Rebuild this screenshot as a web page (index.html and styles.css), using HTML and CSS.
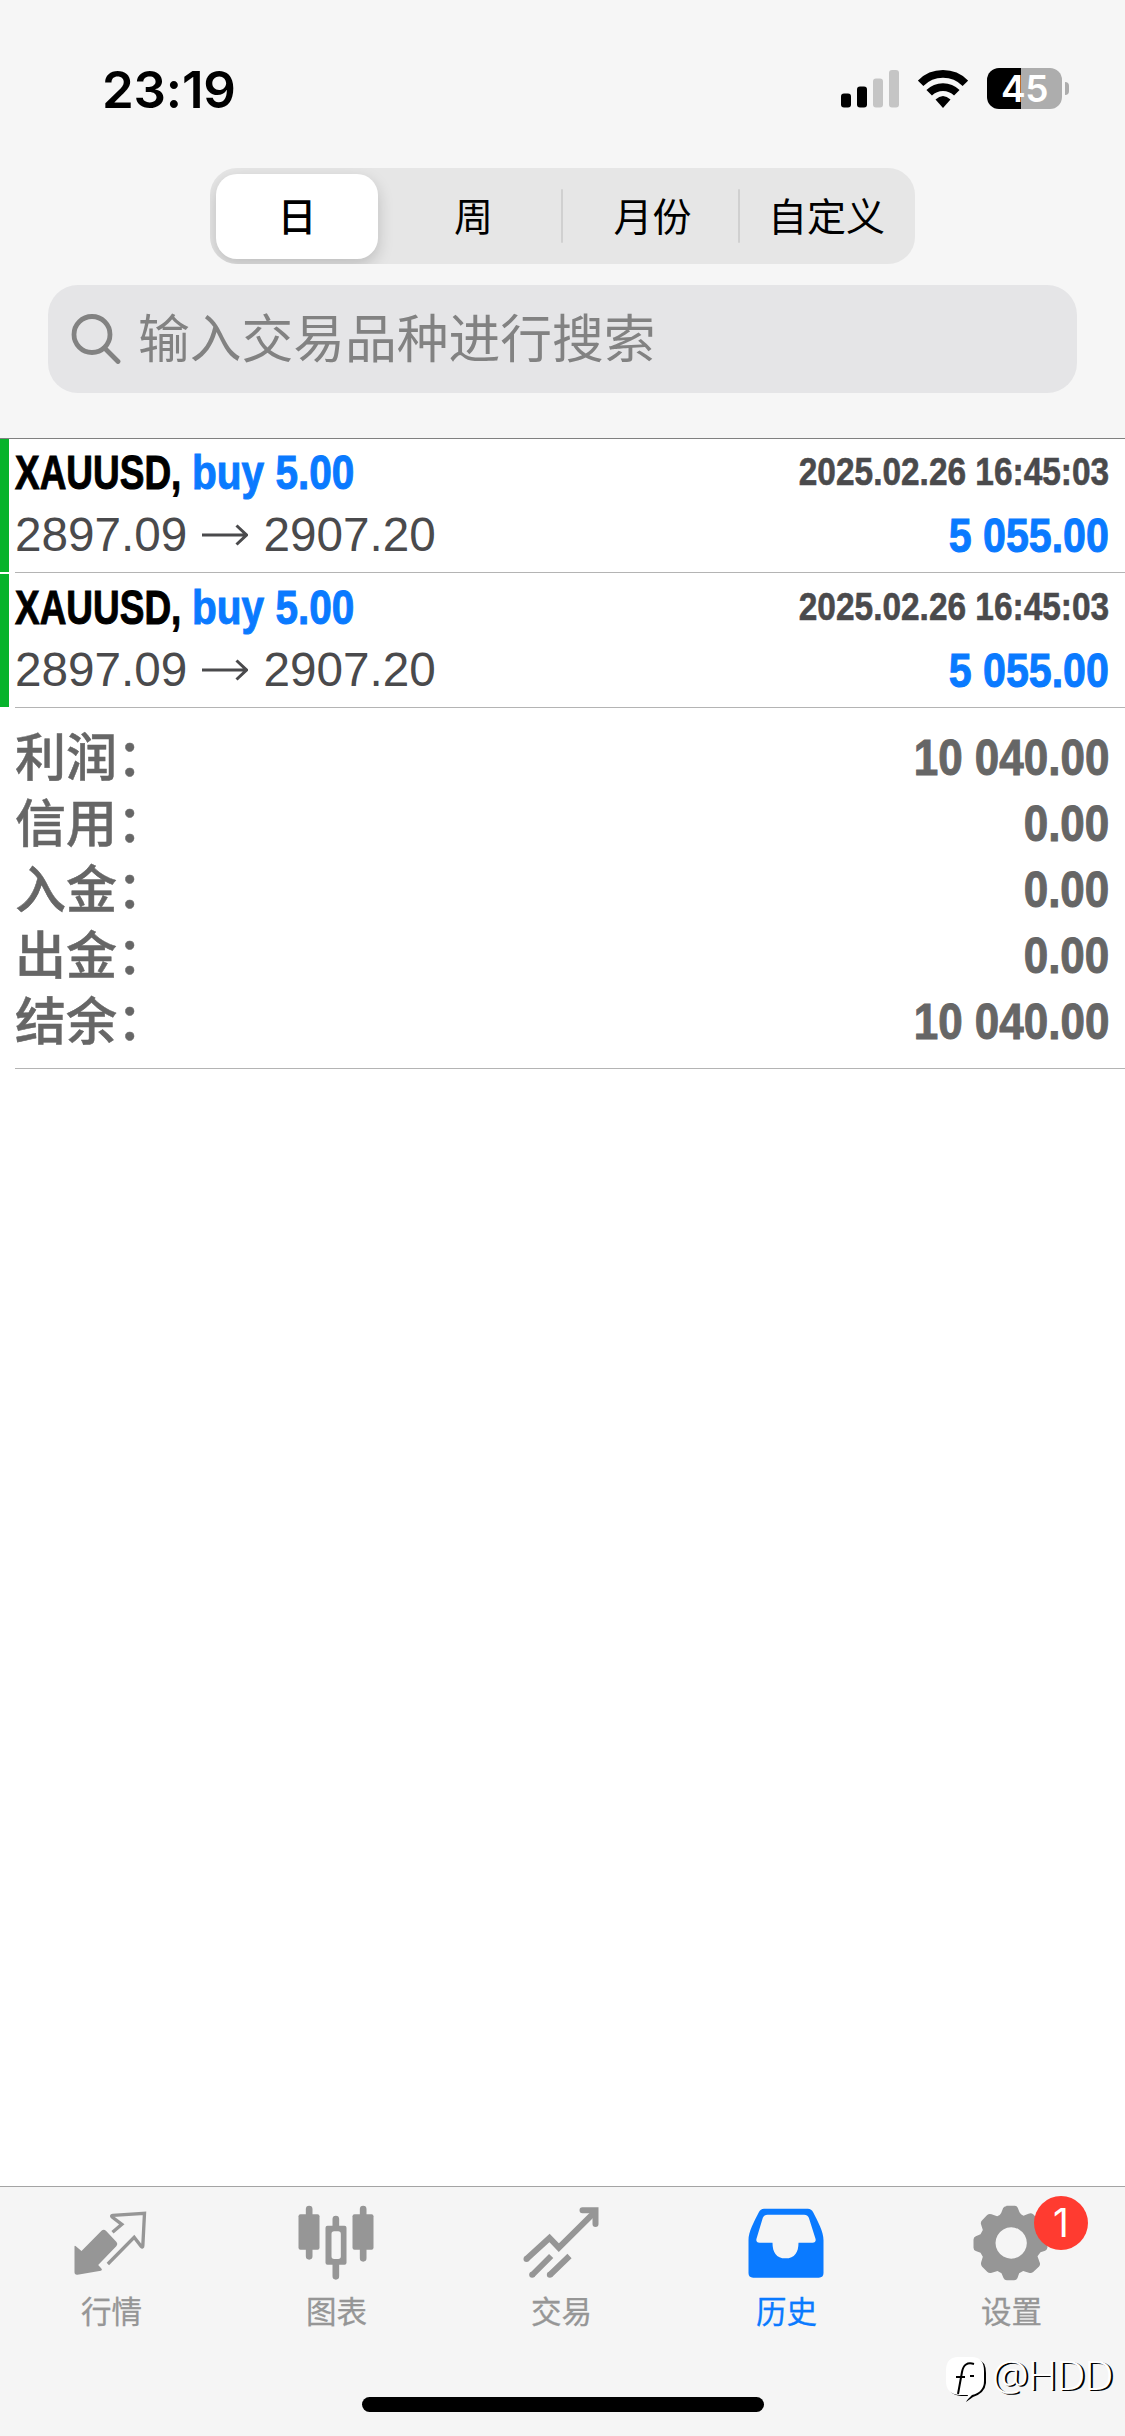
FILE: index.html
```html
<!DOCTYPE html>
<html lang="zh-CN">
<head>
<meta charset="utf-8">
<title>历史</title>
<link rel="stylesheet" href="styles.css">
</head>
<body>
<div class="app">
  <header class="header">
    <div class="status">
      <span class="time">23:19</span>
      <div class="status-icons">
        <svg class="signal" viewBox="0 0 58 38" width="58" height="38">
          <rect x="0" y="23.500" width="10" height="14" rx="3"/>
          <rect x="16" y="16.500" width="10" height="21" rx="3"/>
          <rect class="dim" x="32" y="8.500" width="10" height="29" rx="3"/>
          <rect class="dim" x="48" y="0" width="10" height="37.500" rx="3"/>
        </svg>
        <svg class="wifi" viewBox="0 0 50 38" width="50" height="38">
          <path class="arc" d="M2.600 13.300a31.500 31.500 0 0 1 44.800 0M11.200 22.800a19.500 19.500 0 0 1 27.600 0"/>
          <path d="M17.500 29.500q7.500-7 15 0L25 38z"/>
        </svg>
        <div class="battery"><span class="level">45</span><i class="cap"></i></div>
      </div>
    </div>
    <nav class="segments">
      <span class="segment selected">日</span>
      <span class="segment">周</span>
      <span class="segment ruled">月份</span>
      <span class="segment ruled">自定义</span>
    </nav>
    <div class="search">
      <svg viewBox="0 0 50 50" width="50" height="50"><circle cx="21" cy="20.500" r="18"/><path d="M33.500 34L47 47.500"/></svg>
      <span>输入交易品种进行搜索</span>
    </div>
  </header>

  <main class="content">
    <section class="deal">
      <div class="deal-body">
        <div class="line"><span class="title"><b class="symbol">XAUUSD,</b><b class="side">buy 5.00</b></span><span class="date">2025.02.26 16:45:03</span></div>
        <div class="line"><span class="prices">2897.09<svg class="arrow" viewBox="0 0 46 22" width="46" height="22"><path d="M0 11h44M34.500 1.500l10 9.500l-10 9.500"/></svg>2907.20</span><span class="profit">5 055.00</span></div>
      </div>
    </section>
    <section class="deal">
      <div class="deal-body">
        <div class="line"><span class="title"><b class="symbol">XAUUSD,</b><b class="side">buy 5.00</b></span><span class="date">2025.02.26 16:45:03</span></div>
        <div class="line"><span class="prices">2897.09<svg class="arrow" viewBox="0 0 46 22" width="46" height="22"><path d="M0 11h44M34.500 1.500l10 9.500l-10 9.500"/></svg>2907.20</span><span class="profit">5 055.00</span></div>
      </div>
    </section>
    <section class="summary">
      <div class="total"><span>利润：</span><span class="value">10 040.00</span></div>
      <div class="total"><span>信用：</span><span class="value">0.00</span></div>
      <div class="total"><span>入金：</span><span class="value">0.00</span></div>
      <div class="total"><span>出金：</span><span class="value">0.00</span></div>
      <div class="total"><span>结余：</span><span class="value">10 040.00</span></div>
    </section>
  </main>

  <footer class="footer">
    <nav class="tabs">
      <div class="tab">
        <svg class="icon" viewBox="217.5 100 240 240">
          <path class="fill" d="M225 230q1-4 4 0l17 14 60-61q7-6 14 1l31 33q5 6 0 12l-55 57 9 10q5 6-1 7l-70 12q-9 1-9-8z"/>
          <path class="thin" d="M339 188l28-24-29-22q-4-4 2-5l95-6-5 97q0 7-5 2l-21-27-79 80"/>
        </svg>
        <span>行情</span>
      </div>
      <div class="tab">
        <svg class="icon" viewBox="892.5 100 240 240">
          <path class="wick" d="M929 118v142M1009 148v25M1009 280v40M1091 118v148"/>
          <rect class="fill" x="897" y="134" width="63" height="106" rx="6"/>
          <rect class="fill" x="1059" y="134" width="63" height="106" rx="6"/>
          <path class="fill" fill-rule="evenodd" d="M984 168h51q6 0 6 6v105q0 6-6 6h-51q-6 0-6-6V174q0-6 6-6zM1004 185q-8 0-8 8v67q0 8 8 8h12q8 0 8-8v-67q0-8-8-8z"/>
        </svg>
        <span>图表</span>
      </div>
      <div class="tab">
        <svg class="icon" viewBox="367.5 100 240 240">
          <path class="trend" d="M381 268l69-63 28 29L587 126"/>
          <path class="trend" d="M549 122h39v41" stroke-linecap="round"/>
          <path class="trend" d="M398 316l57-57M451 316l59-57"/>
          <circle class="fill" cx="381" cy="268" r="9"/><circle class="fill" cx="398" cy="315" r="9"/><circle class="fill" cx="451" cy="315" r="9"/>
        </svg>
        <span>交易</span>
      </div>
      <div class="tab active">
        <svg class="icon" viewBox="67.5 100 240 240">
          <path class="fill" fill-rule="evenodd" d="M119 117h131q11 0 16 11c14 28 31 58 31 84v98q0 14-14 14H86q-14 0-14-14v-98c0-26 17-56 31-84q5-11 16-11zM129 135q-10 0-14 9L96 207q-3 12 9 12h39c0 28 11 47 39 47s39-19 39-47h42q12 0 9-12l-20-63q-4-9-14-9z"/>
        </svg>
        <span>历史</span>
      </div>
      <div class="tab">
        <svg class="icon" viewBox="742.5 100 240 240">
          <path class="fill" fill-rule="evenodd" d="M846 108h25q6 0 9 7l5 13q3 7 12 10l15-6q8-4 14 2l16 16q6 6 2 14l-6 15 9 13 14 6q8 3 8 11v24q0 7-7 10l-14 5-9 12 6 17q4 8-2 14l-17 16q-6 5-13 2l-17-5-12 7-5 14q-3 7-10 7h-22q-7 0-10-7l-6-14-12-7-17 5q-8 3-14-3l-15-15q-5-5-3-13l5-17-7-12-14-5q-7-3-7-10v-24q0-7 7-10l14-6 7-13-5-16q-3-7 3-13l15-16q6-5 13-2l17 6q9-3 12-10l6-15q3-5 9-5zM860 173a47 47 0 1 0 .1 0z"/>
        </svg>
        <i class="badge">1</i>
        <span>设置</span>
      </div>
    </nav>
    <div class="home"></div>
    <div class="watermark">
      <svg viewBox="0 0 42 48" width="42" height="48">
        <path d="M14 4h17q9 2 9 14v10q-1 10-13 14l-7 5 3-6h-8Q2 40 2 28V18Q2 6 14 4z" fill="#000"/>
        <path d="M12 2h14q12 0 12 14v10q0 11-12 14l-6 6 2-6H13Q0 39 0 26V16Q0 2 12 2z" fill="#fff"/>
        <path d="M28 9q-10-3-12 8l-4 22M10 22h9M24 21h4" fill="none" stroke="#000" stroke-width="2"/>
      </svg>
      <span>@HDD</span>
    </div>
  </footer>
</div>
</body>
</html>
```
FILE: styles.css
```css
* { box-sizing: border-box; }

body {
  margin: 0;
  font-family: Inter, "Noto Sans CJK SC", sans-serif;
  background: #fff;
}

.app {
  width: 1125px;
  height: 2436px;
  display: flex;
  flex-direction: column;
  overflow: hidden;
}

.header {
  height: 439px;
  flex: none;
  background: #f6f6f6;
  border-bottom: 1px solid #808080;
}

.status {
  height: 168px;
  padding: 0 56px 0 102px;
  display: flex;
  justify-content: space-between;
}
.time {
  margin-top: 59px;
  font-size: 51px;
  line-height: 62px;
  font-weight: 600;
  letter-spacing: -.2px;
}
.status-icons { display: flex; margin-top: 68px; }
.signal { margin: 2px 19px 0 0; }
.signal .dim { fill: #c5c5c5; }
.wifi { margin: 2px 19px 0 0; }
.arc { fill: none; stroke: #000; stroke-width: 7.800; }
.battery { display: flex; align-items: center; height: 41px; }
.level {
  width: 75px;
  height: 41px;
  border-radius: 12px;
  background: linear-gradient(90deg, #000 45.500%, #adadad 45.500%);
  color: #fff;
  font-size: 37px;
  line-height: 41px;
  font-weight: 600;
  letter-spacing: -.5px;
  text-align: center;
}
.cap { width: 4px; height: 13px; margin-left: 3px; border-radius: 0 5px 5px 0; background: #adadad; }

.segments {
  width: 705px;
  height: 96px;
  margin: 0 auto;
  padding: 6px;
  display: grid;
  grid-template-columns: 162px 183px 177px 1fr;
  border-radius: 27px;
  background: #e6e6e6;
  overflow: hidden;
}
.segment {
  position: relative;
  font-size: 39px;
  line-height: 85px;
  text-align: center;
}
.segment:nth-child(2) { padding-left: 8px; }
.selected { border-radius: 21px; background: #fff; font-weight: 500; box-shadow: 0 6px 16px rgba(0, 0, 0, .18); }
.ruled { padding-left: 6px; }
.ruled::before {
  content: "";
  position: absolute;
  left: 0;
  top: 15px;
  width: 2px;
  height: 54px;
  background: #d0d0d0;
  border-radius: 2px;
}

.search {
  height: 108px;
  margin: 21px 48px 0;
  padding-left: 23px;
  display: flex;
  align-items: center;
  border-radius: 30px;
  background: #e5e5e7;
  color: #828282;
  font-size: 51.750px;
  line-height: 109px;
}
.search svg { margin-right: 17px; fill: none; stroke: #828282; stroke-width: 4.800; stroke-linecap: round; }

.content { flex: 1; font-family: "Liberation Sans", "Noto Sans CJK SC", sans-serif; }

.deal {
  height: 135px;
  padding-left: 15px;
  background: linear-gradient(#06b32b, #06b32b) 0 0 / 9px 133px no-repeat;
}
.deal-body { height: 134px; padding: 3px 16px 0 0; border-bottom: 1px solid #b4b4b4; }
.line { height: 63px; display: flex; justify-content: space-between; font-size: 48px; line-height: 62px; white-space: nowrap; }
.title { display: flex; }
.symbol, .side, .date, .profit, .value { -webkit-text-stroke: 1px currentColor; }
.symbol, .side { transform-origin: 0 50%; }
.symbol { width: 177px; transform: scaleX(.77); }
.side { color: #0a7aff; transform: scaleX(.845); }
.date, .profit, .value { font-weight: 700; transform: scaleX(.857); transform-origin: 100% 50%; }
.date { font-size: 39px; line-height: 60px; color: #4a4a4c; -webkit-text-stroke-width: .6px; }
.profit { color: #0a7aff; }
.prices { height: 60px; color: #4a4a4c; font-size: 47.700px; display: flex; align-items: center; }
.arrow { margin: 0 15px 0 15px; fill: none; stroke: #4a4a4c; stroke-width: 3; }

.summary {
  height: 360px;
  margin-left: 15px;
  padding: 17px 16px 0 0;
  border-bottom: 1px solid #b4b4b4;
  color: #666;
}
.total { height: 66px; display: flex; justify-content: space-between; font-size: 51px; line-height: 66px; font-weight: 500; }
.total span:first-child { -webkit-text-stroke: .5px currentColor; }
.value { font-size: 50px; line-height: 64px; font-weight: 700; transform: scaleX(.88); }

.footer {
  position: relative;
  height: 250px;
  flex: none;
  background: #f5f5f5;
  border-top: 1px solid #a4a4a4;
}
.tabs { display: grid; grid-template-columns: repeat(5, 1fr); height: 210px; margin-left: -1px; margin-right: 1px; }
.tab {
  position: relative;
  padding-top: 16px;
  display: flex;
  flex-direction: column;
  align-items: center;
  color: #969696;
  font-size: 30.500px;
  line-height: 40px;
}
.tab span { margin-top: 9px; -webkit-text-stroke: .3px currentColor; }
.active { color: #0a7aff; }
.icon { width: 80px; height: 80px; flex: none; }
.fill { fill: currentColor; }
.thin, .wick, .trend { fill: none; stroke: currentColor; }
.thin { stroke-width: 10; }
.wick { stroke-width: 20; stroke-linecap: round; }
.trend { stroke-width: 18; }
.badge {
  position: absolute;
  left: 135px;
  top: 9px;
  width: 54px;
  height: 54px;
  border-radius: 50%;
  background: #ff3b30;
  color: #fff;
  font-size: 39px;
  line-height: 54px;
  font-style: normal;
  text-align: center;
}
.home { width: 402px; height: 15px; margin: 0 auto; border-radius: 8px; background: #000; }
.watermark {
  position: absolute;
  left: 946px;
  top: 168px;
  display: flex;
  gap: 4px;
  color: #fff;
  font: 300 41px/48px "Noto Sans", sans-serif;
  text-shadow: 2px 1px 0 #000;
}
.watermark span { margin-top: -5px; letter-spacing: -1px; }
```
